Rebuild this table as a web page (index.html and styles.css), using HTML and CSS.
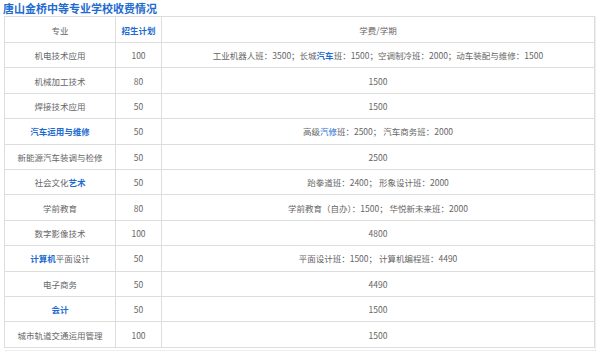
FILE: index.html
```html
<!DOCTYPE html>
<html lang="zh-CN">
<head>
<meta charset="utf-8">
<title>唐山金桥中等专业学校收费情况</title>
<link rel="stylesheet" href="styles.css">
</head>
<body>
<h1 class="title">唐山金桥中等专业学校收费情况</h1>
<div class="frame">
<table class="fees">
  <colgroup>
    <col class="c1"><col class="c2"><col class="c3">
  </colgroup>
  <thead>
    <tr class="head"><th>专业</th><th class="hl">招生计划</th><th>学费/学期</th></tr>
  </thead>
  <tbody>
    <tr><td>机电技术应用</td><td>100</td><td>工业机器人班：3500；长城<b class="hl">汽车</b>班：1500；空调制冷班：2000；动车装配与维修：1500</td></tr>
    <tr><td>机械加工技术</td><td>80</td><td>1500</td></tr>
    <tr><td>焊接技术应用</td><td>50</td><td>1500</td></tr>
    <tr><td><b class="hl">汽车运用与维修</b></td><td>50</td><td>高级<span class="lk">汽修</span>班：2500； 汽车商务班：2000</td></tr>
    <tr><td>新能源汽车装调与检修</td><td>50</td><td>2500</td></tr>
    <tr><td>社会文化<b class="hl">艺术</b></td><td>50</td><td>跆拳道班：2400； 形象设计班：2000</td></tr>
    <tr><td>学前教育</td><td>80</td><td>学前教育（自办）：1500； 华悦新未来班：2000</td></tr>
    <tr><td>数字影像技术</td><td>100</td><td>4800</td></tr>
    <tr><td><b class="hl">计算机</b>平面设计</td><td>50</td><td>平面设计班：1500； 计算机编程班：4490</td></tr>
    <tr><td>电子商务</td><td>50</td><td>4490</td></tr>
    <tr><td><b class="hl">会计</b></td><td>50</td><td>1500</td></tr>
    <tr><td>城市轨道交通运用管理</td><td>100</td><td>1500</td></tr>
  </tbody>
</table>
</div>
</body>
</html>
```
FILE: styles.css
```css
html, body {
  margin: 0;
  padding: 0;
  background: #ffffff;
}
body {
  font-family: "Noto Sans CJK SC", "Noto Sans", sans-serif;
  color: #666666;
}
.title {
  margin: 0;
  padding-left: 3px;
  height: 16px;
  line-height: 16px;
  font-size: 11px;
  font-weight: bold;
  color: #1e6bd0;
}
.frame {
  margin-left: 4px;
  width: 592px;
  border-right: 1px solid #eeeeee;
  border-bottom: 1px solid #eeeeee;
  box-sizing: border-box;
  padding-right: 2px;
  padding-bottom: 2px;
}
.fees {
  border-collapse: collapse;
  width: 590px;
  table-layout: fixed;
  font-size: 8.5px;
}
.c1 { width: 111px; }
.c2 { width: 46px; }
.c3 { width: 433px; }
.fees th,
.fees td {
  border: 1px solid #dddddd;
  text-align: center;
  vertical-align: middle;
  padding: 0 2px;
  font-weight: normal;
  white-space: nowrap;
  color: #666666;
}
.fees tr.head { height: 26px; }
.fees tbody tr { height: 25.42px; }
.fees .hl,
.fees th.hl {
  color: #1e6bd0;
  font-weight: bold;
}
.lk { color: #1e6bd0; }
```
